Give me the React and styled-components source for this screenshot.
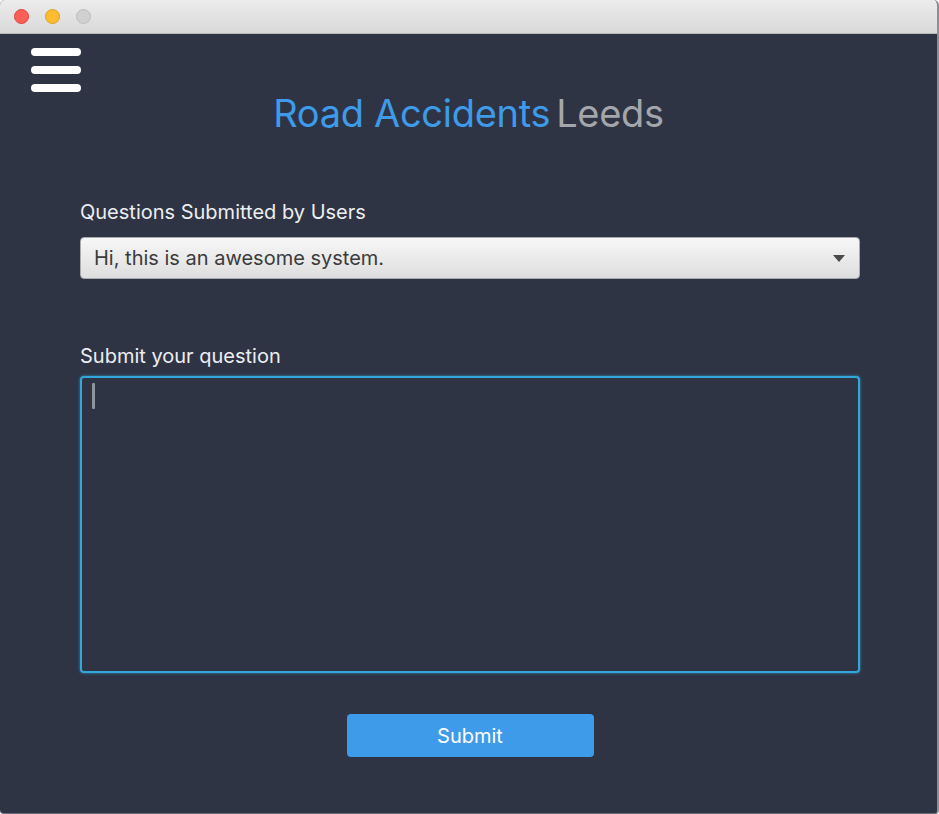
import React, { useState } from "react";
import styled, { createGlobalStyle } from "styled-components";

const GlobalStyle = createGlobalStyle`
  html, body {
    margin: 0;
    padding: 0;
    background: #ffffff;
  }
  body {
    font-family: Inter, "Open Sans", sans-serif;
  }
`;

const Window = styled.div`
  width: 937px;
  height: 813px;
  display: flex;
  flex-direction: column;
  border-right: 2px solid #8d8f93;
  border-bottom: 1px solid #6b6e74;
  border-radius: 5px 5px 4px 4px;
  overflow: hidden;
  background: #2e3444;
`;

const TitleBar = styled.div`
  height: 33px;
  flex: none;
  display: flex;
  align-items: center;
  gap: 16px;
  padding-left: 14px;
  background: linear-gradient(#ececec, #d9d9d9);
  border-bottom: 1px solid #b8b8b8;
`;

const Light = styled.span`
  width: 15px;
  height: 15px;
  border-radius: 50%;
  background: ${(p) => p.$color};
  border: 1px solid ${(p) => p.$edge};
  box-sizing: border-box;
`;

const Body = styled.div`
  flex: 1;
  display: flex;
  flex-direction: column;
  padding-top: 14px;
`;

const Burger = styled.button`
  margin-left: 31px;
  width: 50px;
  padding: 0;
  border: none;
  background: none;
  display: flex;
  flex-direction: column;
  gap: 10px;
  cursor: pointer;
`;

const Bar = styled.span`
  height: 8px;
  border-radius: 4px;
  background: #ffffff;
`;

const Title = styled.h1`
  margin: -1px 0 0 0;
  text-align: center;
  font-size: 38px;
  font-weight: 400;
  line-height: 44px;
  letter-spacing: -0.3px;
`;

const Blue = styled.span`
  color: #3d9be9;
`;

const Grey = styled.span`
  color: #a4a6ab;
  margin-left: 6px;
`;

const Form = styled.div`
  margin: 0 77px 0 80px;
  display: flex;
  flex-direction: column;
`;

const Label = styled.label`
  color: #eceef1;
  font-size: 20px;
  line-height: 24px;
  margin-top: ${(p) => p.$top}px;
  margin-bottom: ${(p) => p.$bottom}px;
`;

const Select = styled.div`
  height: 42px;
  box-sizing: border-box;
  border-radius: 4px;
  border: 1px solid #a9abaf;
  background: linear-gradient(#f7f7f7, #dedede);
  display: flex;
  align-items: center;
  justify-content: space-between;
  padding: 0 14px 0 13px;
  font-size: 20px;
  color: #3b3b3b;
`;

const Arrow = styled.span`
  width: 0;
  height: 0;
  border-left: 6px solid transparent;
  border-right: 6px solid transparent;
  border-top: 7px solid #4a4a4a;
`;

const AreaWrap = styled.div`
  position: relative;
  display: flex;
  flex-direction: column;
`;

const TextArea = styled.textarea`
  height: 297px;
  box-sizing: border-box;
  border: 2px solid #33a6dc;
  border-radius: 4px;
  background: #2e3444;
  box-shadow: 0 0 3px rgba(51, 166, 220, 0.8);
  resize: none;
  padding: 8px 12px;
  font-family: inherit;
  font-size: 20px;
  color: #eceef1;
  caret-color: #aaaaaa;
  outline: none;
`;

const Caret = styled.span`
  position: absolute;
  left: 12px;
  top: 7px;
  width: 3px;
  height: 26px;
  border-radius: 1px;
  background: #8e939c;
`;

const SubmitButton = styled.button`
  align-self: center;
  margin-top: 41px;
  width: 247px;
  height: 43px;
  border: none;
  border-radius: 4px;
  background: #3d9be9;
  color: #ffffff;
  font-family: inherit;
  font-size: 20px;
  cursor: pointer;
`;

export default function App() {
  const [text, setText] = useState("");
  return (
    <>
      <GlobalStyle />
      <Window>
        <TitleBar>
          <Light $color="#fc5f57" $edge="#e0443e" />
          <Light $color="#fdbc2e" $edge="#dea123" />
          <Light $color="#d0d0d0" $edge="#bdbdbd" />
        </TitleBar>
        <Body>
          <Burger aria-label="menu">
            <Bar />
            <Bar />
            <Bar />
          </Burger>
          <Title>
            <Blue>Road Accidents</Blue>
            <Grey>Leeds</Grey>
          </Title>
          <Form>
            <Label $top={65} $bottom={13}>Questions Submitted by Users</Label>
            <Select>
              <span>Hi, this is an awesome system.</span>
              <Arrow />
            </Select>
            <Label $top={65} $bottom={8}>Submit your question</Label>
            <AreaWrap>
              <TextArea value={text} onChange={(e) => setText(e.target.value)} />
              {!text && <Caret />}
            </AreaWrap>
            <SubmitButton>Submit</SubmitButton>
          </Form>
        </Body>
      </Window>
    </>
  );
}
